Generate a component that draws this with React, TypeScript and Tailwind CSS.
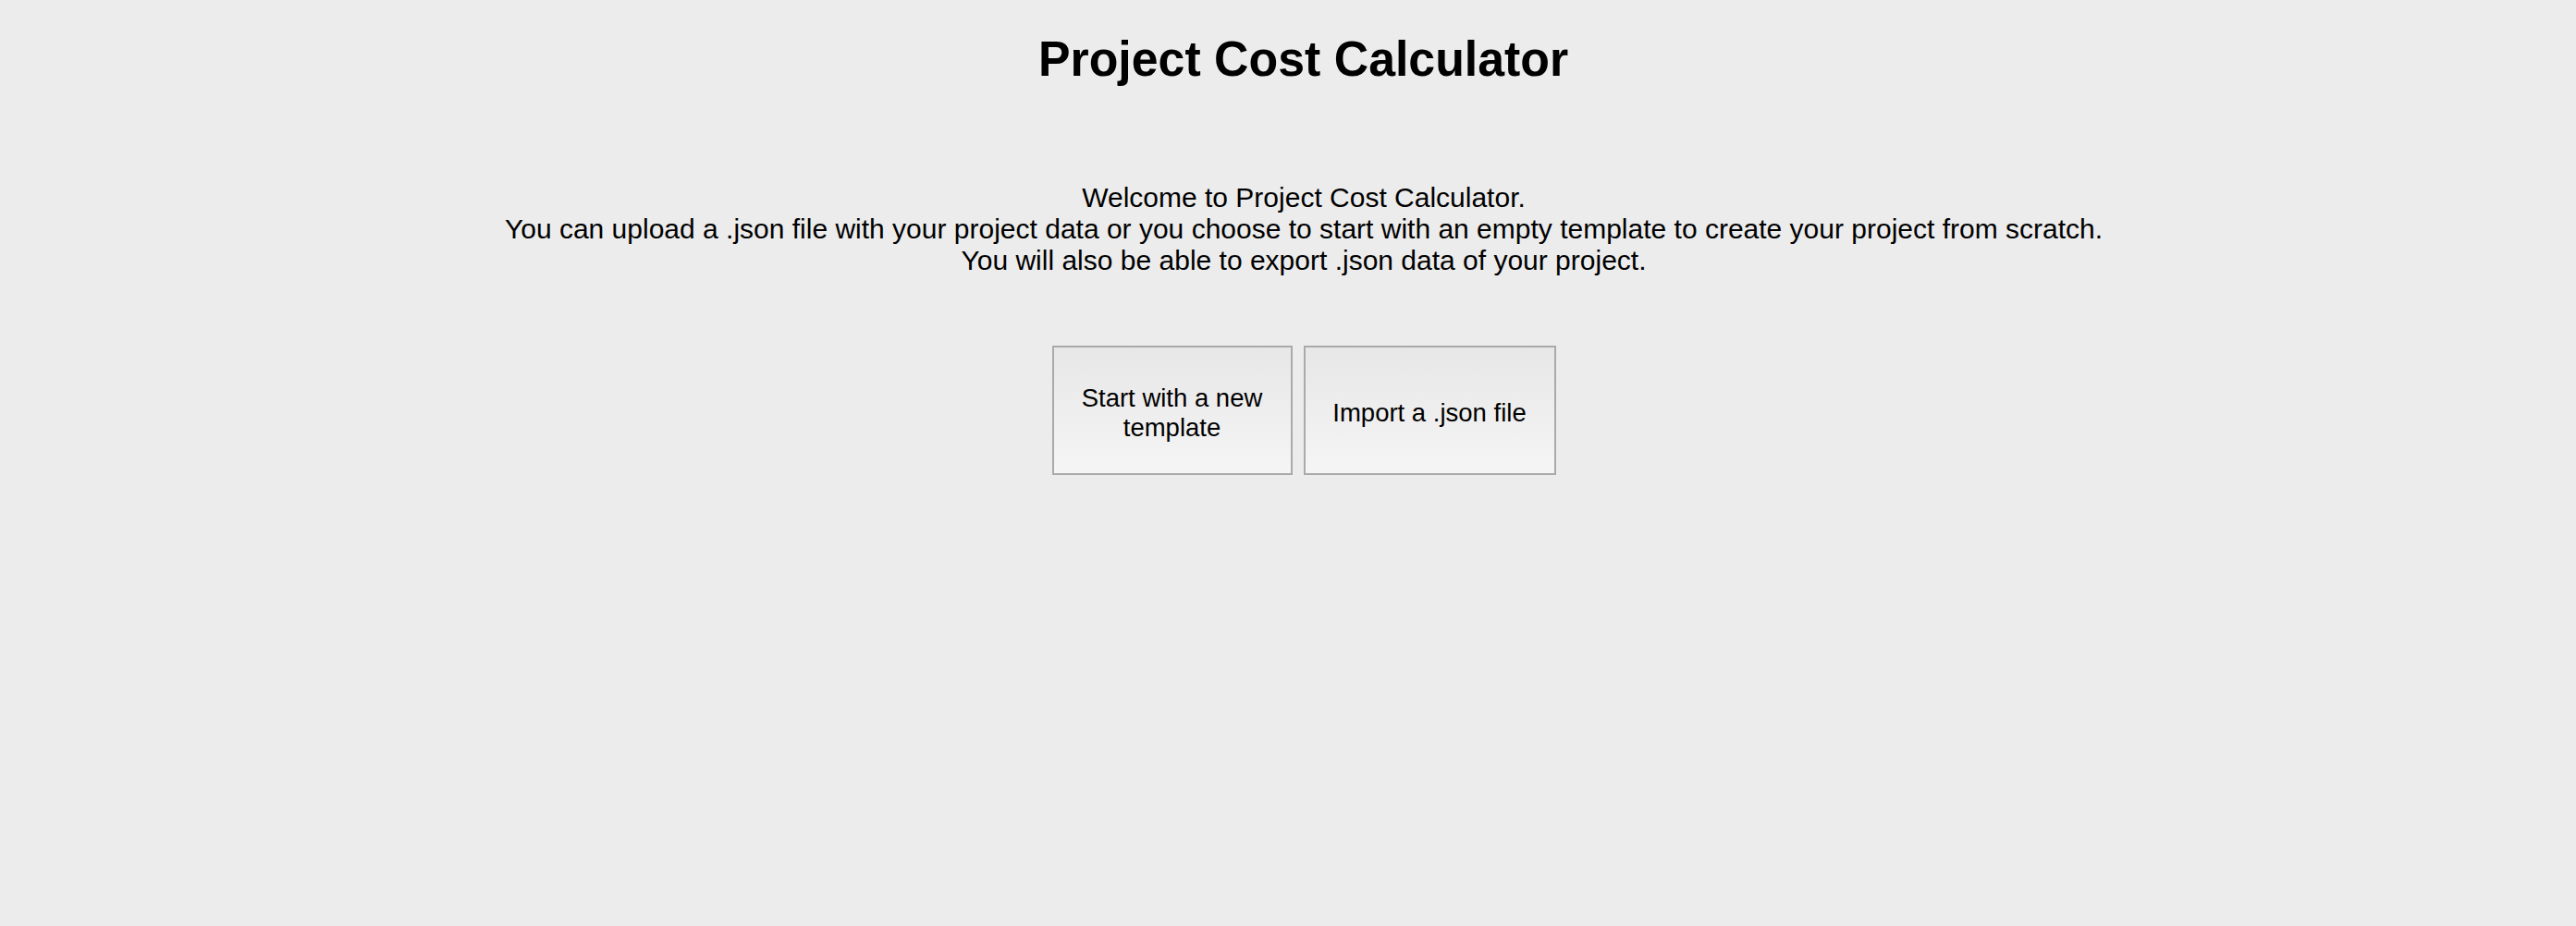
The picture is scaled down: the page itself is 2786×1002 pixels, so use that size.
import React from "react";

function App() {
  return (
    <main
      className="flex h-[1002px] w-full flex-col items-center bg-[#ececec] pl-[34px] text-black"
      style={{ fontFamily: '"Liberation Sans", Arial, sans-serif' }}
    >
      <div className="pt-[32px]">
        <h1 className="inline-block origin-center scale-x-[0.96] text-[54px] leading-[62px] font-bold">
          Project Cost Calculator
        </h1>
      </div>

      <p className="mt-[103px] text-center text-[30px] leading-[34px]">
        Welcome to Project Cost Calculator.
        <br />
        You can upload a .json file with your project data or you choose to start with an empty template to create your project from scratch.
        <br />
        You will also be able to export .json data of your project.
      </p>

      <div className="mt-[75px] flex gap-[12px]">
        <button className="flex h-[140px] w-[260px] items-center justify-center border-2 border-[#aaaaaa] bg-gradient-to-b from-[#e7e7e7] to-[#f5f5f5] px-[26px] pt-[5px] text-[27.5px] leading-[32px]">
          Start with a new template
        </button>
        <button className="flex h-[140px] w-[273px] items-center justify-center border-2 border-[#aaaaaa] bg-gradient-to-b from-[#e7e7e7] to-[#f5f5f5] px-[26px] pt-[5px] text-[27.5px] leading-[32px]">
          Import a .json file
        </button>
      </div>
    </main>
  );
}

export default App;
